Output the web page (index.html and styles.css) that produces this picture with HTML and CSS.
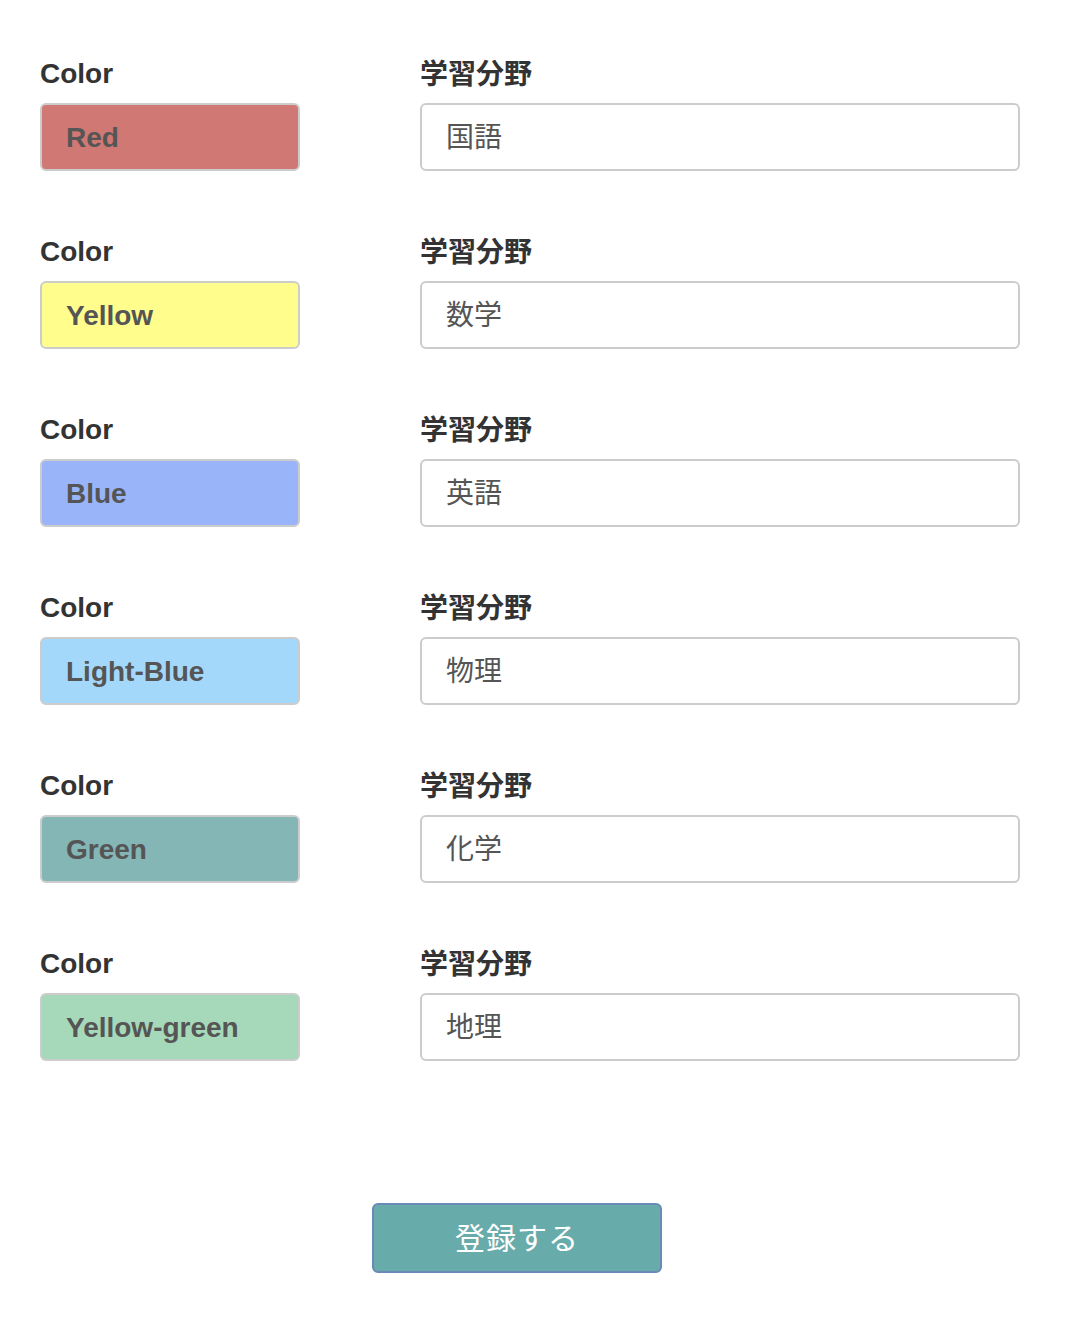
FILE: index.html
```html
<!DOCTYPE html>
<html lang="ja">
<head>
<meta charset="utf-8">
<link rel="stylesheet" href="styles.css">
</head>
<body>
<div class="page">
  <div class="form">
    <div class="field">
      <div class="label">Color</div>
      <div class="swatch red">Red</div>
    </div>
    <div class="field">
      <div class="label jp">学習分野</div>
      <div class="input">国語</div>
    </div>
    <div class="field">
      <div class="label">Color</div>
      <div class="swatch yellow">Yellow</div>
    </div>
    <div class="field">
      <div class="label jp">学習分野</div>
      <div class="input">数学</div>
    </div>
    <div class="field">
      <div class="label">Color</div>
      <div class="swatch blue">Blue</div>
    </div>
    <div class="field">
      <div class="label jp">学習分野</div>
      <div class="input">英語</div>
    </div>
    <div class="field">
      <div class="label">Color</div>
      <div class="swatch lightblue">Light-Blue</div>
    </div>
    <div class="field">
      <div class="label jp">学習分野</div>
      <div class="input">物理</div>
    </div>
    <div class="field">
      <div class="label">Color</div>
      <div class="swatch green">Green</div>
    </div>
    <div class="field">
      <div class="label jp">学習分野</div>
      <div class="input">化学</div>
    </div>
    <div class="field">
      <div class="label">Color</div>
      <div class="swatch yellowgreen">Yellow-green</div>
    </div>
    <div class="field">
      <div class="label jp">学習分野</div>
      <div class="input">地理</div>
    </div>
  </div>
  <div class="actions">
    <button class="submit" type="button">登録する</button>
  </div>
</div>
</body>
</html>
```
FILE: styles.css
```css
html, body {
  margin: 0;
  padding: 0;
  background: #ffffff;
}
.page {
  padding: 57px 40px 0 40px;
  font-family: "Liberation Sans", "Noto Sans CJK JP", sans-serif;
}
.form {
  display: grid;
  grid-template-columns: 260px 600px;
  column-gap: 120px;
  row-gap: 64px;
}
.field {
  display: flex;
  flex-direction: column;
}
.label {
  height: 34px;
  line-height: 34px;
  font-size: 28px;
  font-weight: bold;
  color: #333333;
  margin-bottom: 12px;
}
.label.jp {
  font-family: "Noto Sans CJK JP", sans-serif;
  font-size: 28px;
  line-height: 30px;
}
.swatch, .input {
  box-sizing: border-box;
  height: 68px;
  border: 2px solid #cccccc;
  border-radius: 6px;
  display: flex;
  align-items: center;
  padding-left: 24px;
  color: #555555;
  font-size: 28px;
}
.swatch {
  font-weight: bold;
  padding-top: 1px;
}
.input {
  background: #ffffff;
  font-family: "Noto Sans CJK JP", sans-serif;
  font-size: 28px;
  font-weight: normal;
  padding-bottom: 4px;
}
.red { background: #d07873; }
.yellow { background: #fffd8c; }
.blue { background: #99b4f8; }
.lightblue { background: #a4d8fa; }
.green { background: #84b6b6; }
.yellowgreen { background: #a6d9b9; }
.actions {
  margin-top: 142px;
  padding-left: 332px;
}
.submit {
  box-sizing: border-box;
  width: 290px;
  height: 70px;
  background: #68abab;
  border: 2px solid #6a89b6;
  border-radius: 6px;
  color: #ffffff;
  font-family: "Noto Sans CJK JP", sans-serif;
  font-size: 30px;
  padding: 0 0 4px 0;
  letter-spacing: 1px;
}
```
